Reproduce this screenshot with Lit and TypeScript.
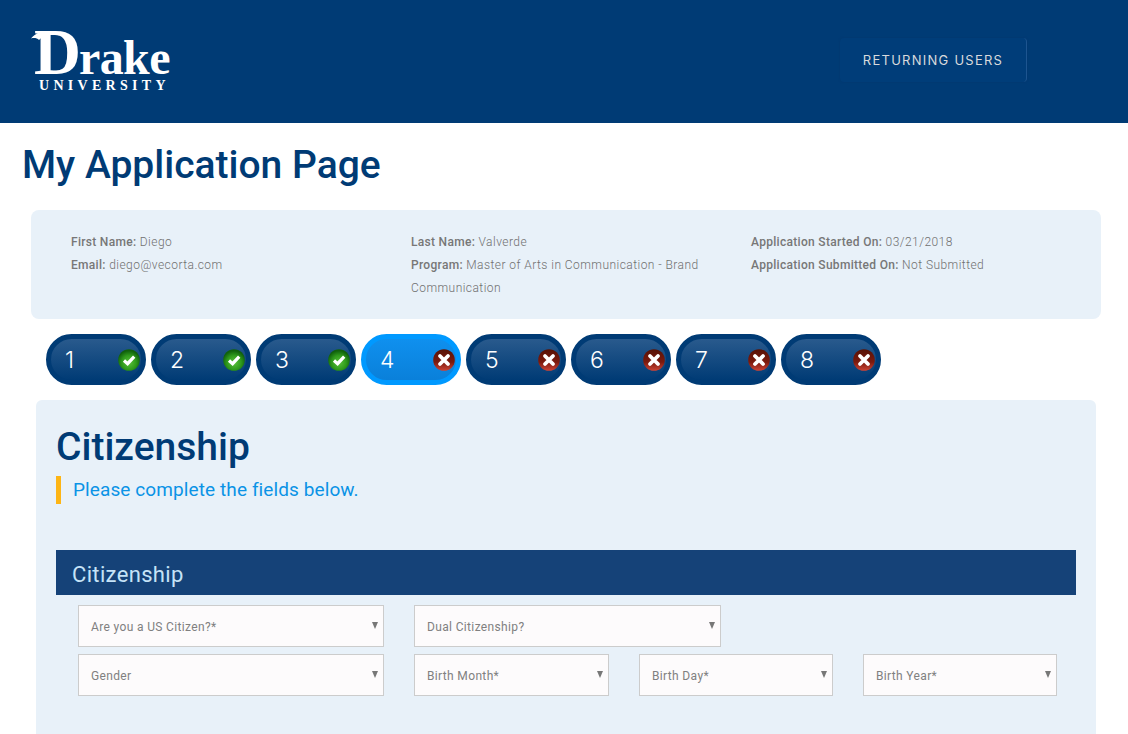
import { LitElement, html, css } from "lit";
import { customElement } from "lit/decorators.js";

const steps = [
  { n: 1, ok: true },
  { n: 2, ok: true },
  { n: 3, ok: true },
  { n: 4, ok: false, active: true },
  { n: 5, ok: false },
  { n: 6, ok: false },
  { n: 7, ok: false },
  { n: 8, ok: false },
];

const okIcon = (id: string) => html`<svg class="status" viewBox="0 0 22 22" width="22" height="22">
  <defs><radialGradient id="g${id}" cx=".5" cy=".62" r=".55"><stop offset="0" stop-color="#5cc23c"/><stop offset=".6" stop-color="#2f9a1c"/><stop offset="1" stop-color="#10610c"/></radialGradient></defs>
  <circle cx="11" cy="11" r="10.8" fill="url(#g${id})"/>
  <path d="M6 11.5l3.6 3.2L16.2 7.6" fill="none" stroke="#fff" stroke-width="3.2"/>
</svg>`;

const badIcon = (id: string) => html`<svg class="status" viewBox="0 0 22 22" width="22" height="22">
  <defs><linearGradient id="r${id}" x1="0" y1="0" x2="0" y2="1"><stop offset="0" stop-color="#571206"/><stop offset=".6" stop-color="#7c1a0e"/><stop offset="1" stop-color="#cf4436"/></linearGradient></defs>
  <circle cx="11" cy="11" r="10.8" fill="url(#r${id})"/>
  <path d="M7 7l8 8M15 7l-8 8" fill="none" stroke="#fff" stroke-width="3.8" stroke-linecap="round"/>
</svg>`;

@customElement("app-root")
export class AppRoot extends LitElement {
  static styles = css`
    :host { display: block; width: 1128px; height: 734px; overflow: hidden; background: #fff; font-family: Roboto, "Liberation Sans", sans-serif; }
    * { box-sizing: border-box; }
    header { height: 123px; background: #003b75; display: flex; align-items: flex-start; justify-content: space-between; padding: 30px 101px 0 31px; }
    .logo { width: 141px; color: #fff; font-family: "Liberation Serif", serif; position: relative; }
    .drake { display: flex; align-items: baseline; height: 48px; font-weight: 700; white-space: nowrap; line-height: 44px; padding-left: 3px; }
    .big-d { font-size: 65px; letter-spacing: -2px; }
    .rake { font-size: 48px; letter-spacing: -.6px; }
    .swoosh { position: absolute; left: 0; top: 0; }
    .univ { font-size: 14px; line-height: 14px; letter-spacing: 4.3px; padding: 1px 0 0 8px; white-space: nowrap; font-weight: 700; }
    .btn { margin-top: 8px; width: 187px; height: 44px; border-radius: 4px; background: #003d79; border-right: 1px solid #1d5590; box-shadow: 0 0 2px #04386c; display: flex; align-items: center; justify-content: center; font-family: Inter, sans-serif; font-size: 13px; letter-spacing: 1.25px; color: #d8dadc; }
    h1 { margin: 0; font-size: 39px; line-height: 44px; font-weight: 500; color: #003b75; }
    .page-title { padding: 20px 0 0 22px; height: 87px; }
    .info { margin-left: 31px; width: 1070px; height: 109px; border-radius: 8px; background: #e8f1f9; padding: 21px 40px 0; display: grid; grid-template-columns: repeat(3, 340px); grid-auto-rows: min-content; font-size: 12px; line-height: 23px; color: #707070; letter-spacing: .45px; font-weight: 300; }
    .info b { font-weight: 500; letter-spacing: .3px; color: #777; }
    .info p { margin: 0; padding-right: 40px; }
    .steps { display: flex; gap: 5px; padding: 15px 0 0 46px; }
    .pill { width: 100px; height: 51px; border-radius: 26px; border: 5px solid #003b75; background: linear-gradient(#295a8d, #003b75); display: flex; align-items: center; justify-content: space-between; padding: 0 1px 0 14px; color: #fff; font-family: Inter, sans-serif; font-weight: 300; font-size: 23px; }
    .pill.active { border-color: #0099ff; background: linear-gradient(#0f90ee, #0a80da); }
    .status { display: block; }
    .panel { margin: 15px 0 0 36px; width: 1060px; height: 340px; background: #e8f1f9; border-radius: 6px 6px 0 0; padding: 25px 20px 0; }
    .note { margin-top: 7px; height: 28px; border-left: 5px solid #fdb515; padding-left: 12px; font-size: 19px; line-height: 28px; color: #0a93e6; letter-spacing: .1px; }
    .bar { margin-top: 46px; height: 45px; background: #154278; color: #c5e3f7; font-size: 22px; line-height: 49px; padding-left: 16px; letter-spacing: .34px; }
    .row { display: flex; gap: 30px; margin: 10px 0 0 22px; }
    .row + .row { margin-top: 7px; }
    .select { height: 42px; background: #fdfbfc; border: 1px solid #ccc; display: flex; align-items: center; justify-content: space-between; padding: 0 5px 0 12px; font-size: 12px; color: #808080; letter-spacing: .35px; }
    .select span { padding-top: 2px; }
    .arrow { width: 0; height: 0; border-left: 3.5px solid transparent; border-right: 3.5px solid transparent; border-top: 7px solid #777; margin-top: -2px; }
  `;

  private sel(label: string, w: number) {
    return html`<div class="select" style="width:${w}px"><span>${label}</span><i class="arrow"></i></div>`;
  }

  render() {
    return html`
      <header>
        <div class="logo" aria-label="Drake University">
          <div class="drake"><span class="big-d">D</span><span class="rake">rake</span></div>
          <svg class="swoosh" width="50" height="14" viewBox="0 0 50 14">
            <path d="M0 8.5C4 3.5 10 1 17 1c8 0 15 1.5 22 5l-1 1.5C31 5.5 25 5 20 5c-5 0-9 1.5-12 5C6 8 3 7.5 0 8.5z" fill="#fff"/>
          </svg>
          <div class="univ">UNIVERSITY</div>
        </div>
        <div class="btn">RETURNING USERS</div>
      </header>
      <div class="page-title"><h1>My Application Page</h1></div>
      <section class="info">
        <div><p><b>First Name:</b> Diego</p><p><b>Email:</b> diego@vecorta.com</p></div>
        <div><p><b>Last Name:</b> Valverde</p><p><b>Program:</b> Master of Arts in Communication - Brand Communication</p></div>
        <div><p><b>Application Started On:</b> 03/21/2018</p><p><b>Application Submitted On:</b> Not Submitted</p></div>
      </section>
      <nav class="steps">
        ${steps.map((s) => html`<div class="pill ${s.active ? "active" : ""}"><span>${s.n}</span>${s.ok ? okIcon(String(s.n)) : badIcon(String(s.n))}</div>`)}
      </nav>
      <main class="panel">
        <h1>Citizenship</h1>
        <div class="note">Please complete the fields below.</div>
        <div class="bar">Citizenship</div>
        <div class="row">${this.sel("Are you a US Citizen?*", 306)}${this.sel("Dual Citizenship?", 307)}</div>
        <div class="row">${this.sel("Gender", 306)}${this.sel("Birth Month*", 195)}${this.sel("Birth Day*", 194)}${this.sel("Birth Year*", 194)}</div>
      </main>
    `;
  }
}
